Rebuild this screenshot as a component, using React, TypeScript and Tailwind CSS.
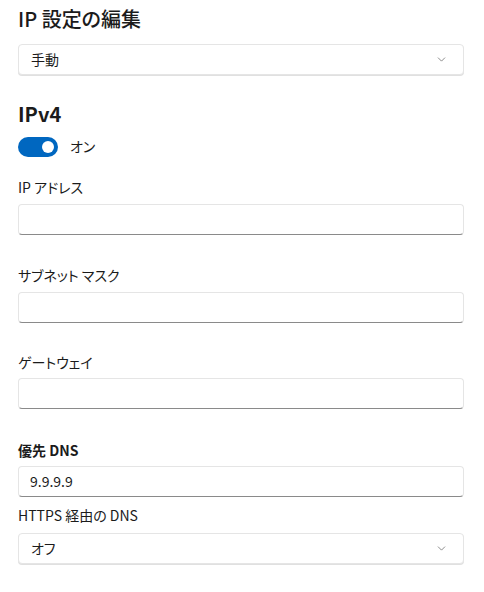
import { ChevronDown } from 'lucide-react';

function Dropdown({ value }: { value: string }) {
  return (
    <div className="flex h-[31px] items-center justify-between rounded-[4px] border border-[#e5e5e5] bg-white pl-3 pr-[15px] text-[14px] text-[#1b1b1b] shadow-[0_1px_0_#e0e0e0]">
      <span>{value}</span>
      <ChevronDown className="h-[13px] w-[13px] text-[#5c5c5c]" strokeWidth={1.3} />
    </div>
  );
}

function TextBox({ value }: { value?: string }) {
  return (
    <div className="flex h-[31px] items-center rounded-[4px] border border-[#e5e5e5] border-b-[#8a8a8a] bg-white px-[11px] text-[14px] text-[#1b1b1b]">
      {value}
    </div>
  );
}

export default function App() {
  return (
    <div
      className="min-h-[592px] w-[484px] bg-white pl-[18px] pr-[20px] text-[#1b1b1b] [font-feature-settings:'palt']"
      style={{ fontFamily: '"Noto Sans CJK JP", "Noto Sans", sans-serif' }}
    >
      <h1 className="pt-[5px] text-[20px] font-medium leading-[28px]">IP 設定の編集</h1>
      <div className="mt-[11px]">
        <Dropdown value="手動" />
      </div>

      <h2 className="mt-[25px] text-[20px] font-semibold leading-[28px]">IPv4</h2>
      <div className="mt-[8px] flex items-center gap-3">
        <div className="flex h-[20px] w-[40px] items-center justify-end rounded-full bg-[#0067c0] pr-[4px]">
          <div className="h-[12px] w-[12px] rounded-full bg-white" />
        </div>
        <span className="text-[14px]">オン</span>
      </div>

      <div className="mt-[20px] text-[14px] leading-[20px]">IP アドレス</div>
      <div className="mt-[7px]">
        <TextBox />
      </div>

      <div className="mt-[30px] text-[14px] leading-[20px]">サブネット マスク</div>
      <div className="mt-[7px]">
        <TextBox />
      </div>

      <div className="mt-[29px] text-[14px] leading-[20px]">ゲートウェイ</div>
      <div className="mt-[6px]">
        <TextBox />
      </div>

      <div className="mt-[31px] text-[14px] font-semibold leading-[20px]">優先 DNS</div>
      <div className="mt-[6px]">
        <TextBox value="9.9.9.9" />
      </div>

      <div className="mt-[8px] text-[14px] leading-[20px]">HTTPS 経由の DNS</div>
      <div className="mt-[8px]">
        <Dropdown value="オフ" />
      </div>
    </div>
  );
}
